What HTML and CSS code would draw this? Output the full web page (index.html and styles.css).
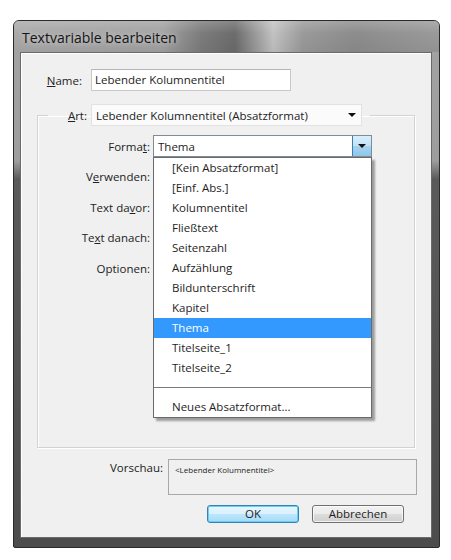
FILE: index.html
```html
<!DOCTYPE html>
<html lang="de">
<head>
<meta charset="utf-8">
<title>Textvariable bearbeiten</title>
<link rel="stylesheet" href="styles.css">
</head>
<body>
<div class="window">
  <div class="titlebar">Textvariable bearbeiten</div>
  <div class="client">
    <div class="name-row">
      <span class="lbl name-lbl"><u>N</u>ame:</span>
      <div class="textbox">Lebender Kolumnentitel</div>
    </div>
    <fieldset class="group">
      <legend class="group-legend">
        <span class="lbl art-lbl"><u>A</u>rt:</span>
        <div class="flatcombo">
          <span>Lebender Kolumnentitel (Absatzformat)</span>
          <span class="tri"></span>
        </div>
      </legend>
      <div class="frows">
        <div class="frow">
          <span class="lbl flbl">Forma<u>t</u>:</span>
          <div class="combo-wrap">
            <div class="combo">
              <span class="combo-text">Thema</span>
              <span class="combo-btn"><span class="tri"></span></span>
            </div>
            <ul class="droplist">
              <li>[Kein Absatzformat]</li>
              <li>[Einf. Abs.]</li>
              <li>Kolumnentitel</li>
              <li>Fließtext</li>
              <li>Seitenzahl</li>
              <li>Aufzählung</li>
              <li>Bildunterschrift</li>
              <li>Kapitel</li>
              <li class="sel">Thema</li>
              <li>Titelseite_1</li>
              <li>Titelseite_2</li>
              <li class="sep"></li>
              <li>Neues Absatzformat...</li>
            </ul>
          </div>
        </div>
        <div class="frow"><span class="lbl flbl">V<u>e</u>rwenden:</span></div>
        <div class="frow"><span class="lbl flbl">Text da<u>v</u>or:</span></div>
        <div class="frow"><span class="lbl flbl">Te<u>x</u>t danach:</span></div>
        <div class="frow"><span class="lbl flbl">Optionen:</span></div>
      </div>
    </fieldset>
    <div class="preview-row">
      <span class="lbl prev-lbl">Vorschau:</span>
      <div class="preview">&lt;Lebender Kolumnentitel&gt;</div>
    </div>
    <div class="buttons">
      <button class="btn btn-default">OK</button>
      <button class="btn">Abbrechen</button>
    </div>
  </div>
</div>
</body>
</html>
```

FILE: styles.css
```css
* { box-sizing: border-box; }
html, body { margin: 0; padding: 0; background: #ffffff; }
body {
  width: 451px;
  height: 560px;
  overflow: hidden;
  padding: 20px 0 0 13px;
  font-family: "Open Sans", "Noto Sans", sans-serif;
  font-size: 11.5px;
  color: #222222;
}
u { text-decoration: underline; text-underline-offset: 1px; }

.window {
  width: 427px;
  height: 528px;
  border: 1px solid #2a2a2a;
  border-radius: 6px 6px 2px 2px;
  background: linear-gradient(to bottom, #a3a3a3 0, #9d9d9d 140px, #5a5a5a 158px, #4c4c4c 100%);
  display: flex;
  flex-direction: column;
  overflow: hidden;
}
.titlebar {
  height: 31px;
  padding: 2px 0 0 8px;
  line-height: 29px;
  font-size: 14px;
  color: #141414;
  text-shadow: 0 0 6px rgba(255,255,255,0.7);
  background:
    linear-gradient(to bottom, rgba(255,255,255,0.18) 0, rgba(255,255,255,0) 40%, rgba(0,0,0,0.05) 100%),
    linear-gradient(to right, #a9a9a9 0, #a2a2a2 35%, #7c7c7c 44%, #6c6c6c 52%, #c2c2c2 61%, #9a9a9a 68%, #8c8c8c 80%, #9a9a9a 100%);
}
.client {
  flex: 1;
  margin: 0 7px 9px 6px;
  background: #f0f0f0;
  border: 1px solid #6a6a6a;
  box-shadow: inset 1px 1px 0 #ffffff;
  display: flex;
  flex-direction: column;
}
.lbl { display: inline-block; text-align: right; white-space: nowrap; }

.name-row {
  display: flex;
  align-items: center;
  margin-top: 16px;
  height: 22px;
}
.name-lbl { width: 61px; margin-right: 9px; }
.textbox {
  width: 200px;
  height: 22px;
  border: 1px solid #c9c9c9;
  border-top-color: #b5b5b5;
  background: #ffffff;
  padding: 0 3px;
  line-height: 20px;
}

.group {
  margin: 13px 16px 0 16px;
  padding: 0;
  border: 1px solid #d3d3d3;
  box-shadow: inset 1px 1px 0 #ffffff, 1px 1px 0 #ffffff;
  min-inline-size: 0;
}
.group-legend {
  margin-left: 10px;
  padding: 0 8px 0 0;
  display: flex;
  align-items: center;
  height: 22px;
}
.art-lbl { width: 39px; margin-right: 4px; }
.flatcombo {
  width: 271px;
  height: 22px;
  background: #fbfbfb;
  border: 1px solid #e2e2e2;
  display: flex;
  align-items: center;
  justify-content: space-between;
  padding: 0 5px 0 4px;
}
.tri {
  width: 0;
  height: 0;
  border-left: 4px solid transparent;
  border-right: 4px solid transparent;
  border-top: 4px solid #111111;
}

.frows { height: 321px; padding-top: 5px; }
.frow {
  height: 30.5px;
  display: flex;
  align-items: center;
}
.flbl { width: 112px; margin-right: 3px; }

.combo-wrap { position: relative; }
.combo {
  width: 219px;
  height: 22px;
  background: #ffffff;
  border: 1px solid #7f8b97;
  display: flex;
  align-items: center;
}
.combo-text { flex: 1; padding-left: 4px; }
.combo-btn {
  width: 19px;
  height: 20px;
  border-left: 1px solid #3c7fb1;
  background: linear-gradient(to bottom, #d9effb 0, #bfe2f7 50%, #a5d3f1 51%, #8fc6ea 100%);
  display: flex;
  align-items: center;
  justify-content: center;
}
.droplist {
  position: absolute;
  top: 100%;
  left: 0;
  z-index: 5;
  width: 219px;
  margin: 0;
  padding: 0;
  list-style: none;
  background: #ffffff;
  border: 1px solid #6a6a6a;
  box-shadow: 3px 3px 2px rgba(0,0,0,0.35);
}
.droplist li {
  height: 20px;
  line-height: 20px;
  padding-left: 18px;
  color: #1e1e1e;
  white-space: nowrap;
}
.droplist li.sel { background: #3399ff; color: #ffffff; }
.droplist li.sep {
  height: 19px;
  background: linear-gradient(to bottom, transparent 9px, #7a7a7a 9px, #7a7a7a 10px, transparent 10px);
}

.preview-row {
  display: flex;
  align-items: flex-start;
  margin-top: 11px;
}
.prev-lbl { width: 142px; margin-right: 5px; padding-top: 1px; }
.preview {
  width: 249px;
  height: 36px;
  border: 1px solid #a8a8a8;
  background: #f0f0f0;
  font-size: 8px;
  padding: 4px 6px;
  line-height: 12px;
}

.buttons {
  display: flex;
  justify-content: flex-end;
  gap: 13px;
  margin-top: 10px;
  padding-right: 27px;
}
.btn {
  width: 92px;
  height: 18px;
  padding: 0;
  font-family: "Open Sans", "Noto Sans", sans-serif;
  font-size: 11.5px;
  line-height: 16px;
  color: #1e1e1e;
  border: 1px solid #707070;
  border-radius: 3px;
  background: linear-gradient(to bottom, #f2f2f2 0, #ebebeb 50%, #dddddd 51%, #cfcfcf 100%);
  box-shadow: inset 0 0 0 1px rgba(255,255,255,0.7);
}
.btn-default {
  border-color: #3c7fb1;
  background: linear-gradient(to bottom, #eaf6fd 0, #d9f0fc 50%, #bee6fd 51%, #a7d9f5 100%);
  box-shadow: inset 0 0 0 1px #5fd3f7;
}
```
